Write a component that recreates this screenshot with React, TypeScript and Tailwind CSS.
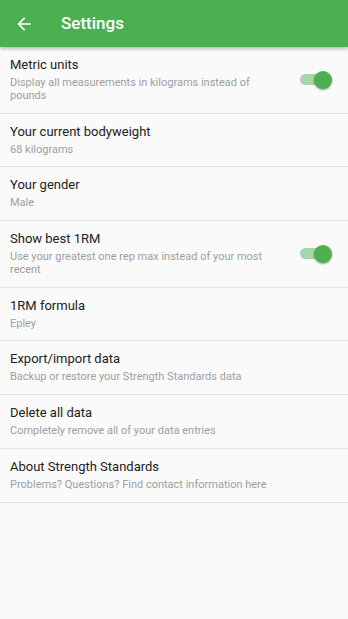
import React from "react";

type Item = { title: string; sub: string; toggle?: boolean };

const items: Item[] = [
  { title: "Metric units", sub: "Display all measurements in kilograms instead of pounds", toggle: true },
  { title: "Your current bodyweight", sub: "68 kilograms" },
  { title: "Your gender", sub: "Male" },
  { title: "Show best 1RM", sub: "Use your greatest one rep max instead of your most recent", toggle: true },
  { title: "1RM formula", sub: "Epley" },
  { title: "Export/import data", sub: "Backup or restore your Strength Standards data" },
  { title: "Delete all data", sub: "Completely remove all of your data entries" },
  { title: "About Strength Standards", sub: "Problems? Questions? Find contact information here" },
];

function Toggle() {
  return (
    <div className="relative w-[34px] h-[20px] shrink-0 flex items-center">
      <div className="w-[26px] h-[11px] rounded-full bg-[#a5d6a7] ml-[2px]" />
      <div className="absolute right-0 top-[1px] w-[18px] h-[18px] rounded-full bg-[#4caf50] shadow-[0_1px_2px_rgba(0,0,0,0.4)]" />
    </div>
  );
}

export default function App() {
  return (
    <div className="w-[348px] h-[619px] bg-[#fafafa] overflow-hidden" style={{ fontFamily: "Roboto, 'Liberation Sans', sans-serif" }}>
      <div className="relative z-10 h-[47px] bg-[#4caf50] flex items-center shadow-[0_2px_3px_rgba(0,0,0,0.25)]">
        <div className="w-[48px] flex justify-center">
          <svg width="20" height="20" viewBox="0 0 24 24" fill="#fff">
            <path d="M20 11H7.83l5.59-5.59L12 4l-8 8 8 8 1.41-1.41L7.83 13H20v-2z" />
          </svg>
        </div>
        <div className="ml-[13px] text-white text-[17px] font-medium leading-none">Settings</div>
      </div>
      <div className="flex flex-col">
        {items.map((it) => (
          <div key={it.title} className="flex items-center border-b border-[#e6e6e6] pl-[10px] pr-[16px] pt-[10px] pb-[10.7px]">
            <div className="flex-1 flex flex-col gap-[3px] pr-[30px]">
              <div className="text-[13px] leading-[16px] text-[#212121]">{it.title}</div>
              <div className="text-[11px] leading-[13px] text-[#9e9e9e]">{it.sub}</div>
            </div>
            {it.toggle && <Toggle />}
          </div>
        ))}
      </div>
    </div>
  );
}
